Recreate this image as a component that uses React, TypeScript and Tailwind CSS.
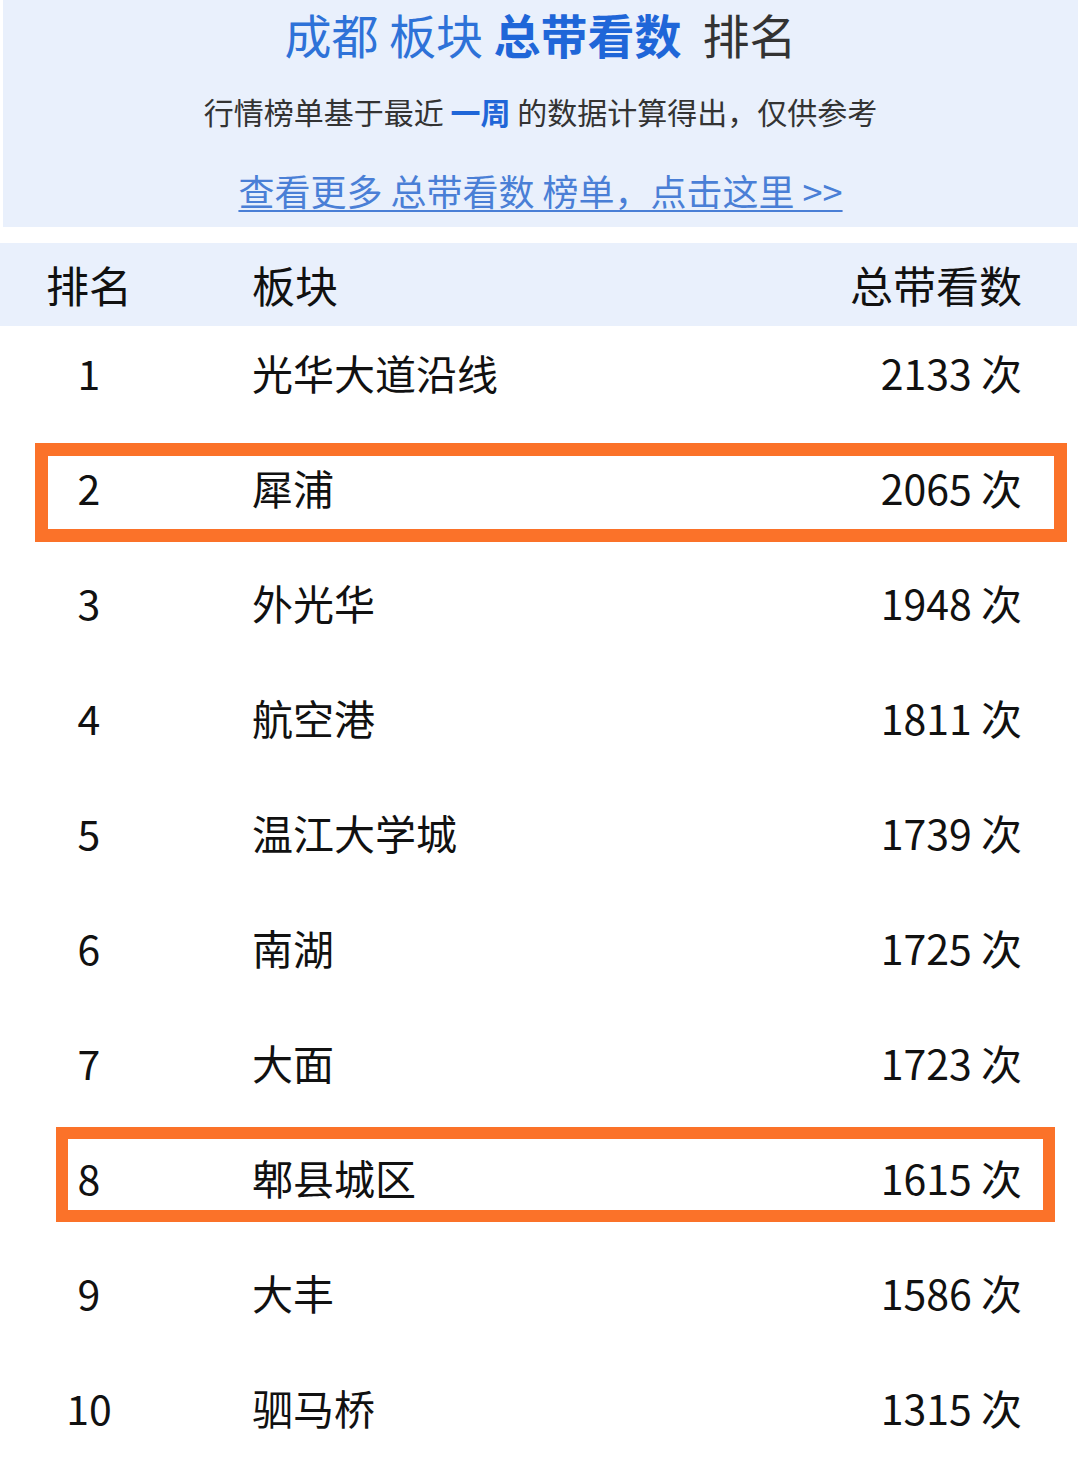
const rows = [
  { rank: 1, name: "光华大道沿线", count: 2133 },
  { rank: 2, name: "犀浦", count: 2065, mark: "a" },
  { rank: 3, name: "外光华", count: 1948 },
  { rank: 4, name: "航空港", count: 1811 },
  { rank: 5, name: "温江大学城", count: 1739 },
  { rank: 6, name: "南湖", count: 1725 },
  { rank: 7, name: "大面", count: 1723 },
  { rank: 8, name: "郫县城区", count: 1615, mark: "b" },
  { rank: 9, name: "大丰", count: 1586 },
  { rank: 10, name: "驷马桥", count: 1315 },
];

const font = { fontFamily: '"Noto Sans CJK SC", "Noto Sans", sans-serif' };

export default function App() {
  return (
    <div className="w-[1080px] bg-white text-[#111]" style={font}>
      <section className="ml-[3px] mr-[2px] flex h-[227px] flex-col items-center bg-[#e9f0fc] pt-[6px]">
        <h1 className="text-[47px] leading-[56px] whitespace-pre">
          <span className="text-[#2e72d8]">成都 板块 </span>
          <span className="font-bold text-[#1f66d8]">总带看数</span>
          <span className="text-[#333]">  排名</span>
        </h1>
        <p className="mt-[29px] text-[30px] leading-[40px] text-[#333] whitespace-pre">
          行情榜单基于最近 <span className="font-bold text-[#1f66d8]">一周</span> 的数据计算得出，仅供参考
        </p>
        <a className="mt-[37px] text-[36px] leading-[44px] text-[#4a7fd6] underline decoration-2 underline-offset-[4px] whitespace-pre">
          查看更多 总带看数 榜单，点击这里 &gt;&gt;
        </a>
      </section>

      <div className="mt-[16px] mr-[3px] flex h-[83px] items-center bg-[#e9f0fc] text-[43px]">
        <div className="w-[178px] text-center">排名</div>
        <div className="flex-1 pl-[74px]">板块</div>
        <div className="pr-[55px]">总带看数</div>
      </div>

      <ul>
        {rows.map((row) => (
          <li
            key={row.rank}
            className="relative flex h-[115px] items-start pt-[22px] text-[41px] leading-[48px]"
          >
            <div className="w-[178px] text-center">{row.rank}</div>
            <div className="flex-1 pl-[74px]">{row.name}</div>
            <div className="pr-[58px]">{row.count} 次</div>
            {row.mark === "a" && (
              <div className="absolute left-[35px] top-[2px] h-[99px] w-[1032px] border-[13px] border-[#fb7229]" />
            )}
            {row.mark === "b" && (
              <div className="absolute left-[56px] top-[-4px] h-[95px] w-[999px] border-[12px] border-[#fb7229]" />
            )}
          </li>
        ))}
      </ul>
    </div>
  );
}
